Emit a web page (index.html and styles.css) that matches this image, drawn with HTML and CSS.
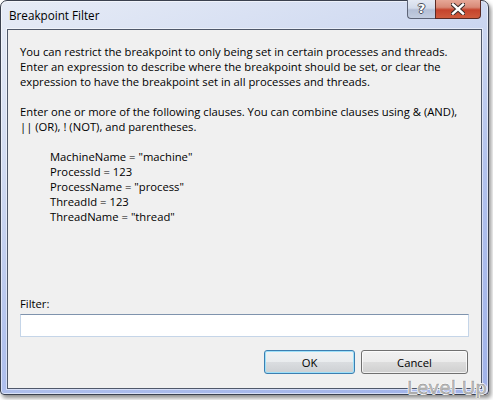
FILE: index.html
```html
<!DOCTYPE html>
<html>
<head>
<meta charset="utf-8">
<link rel="stylesheet" href="styles.css">
</head>
<body>
<div class="window">
  <div class="titlebar">
    <span class="title">Breakpoint Filter</span>
    <div class="caption">
      <div class="cap help"><span>?</span></div>
      <div class="cap close">
        <svg width="14" height="12" viewBox="0 0 14 12">
          <path d="M2 1.5 L12 10.5 M12 1.5 L2 10.5" stroke="#3a2a28" stroke-width="4.4" stroke-linecap="square" fill="none"/>
          <path d="M2 1.5 L12 10.5 M12 1.5 L2 10.5" stroke="#ffffff" stroke-width="2.4" stroke-linecap="square" fill="none"/>
        </svg>
      </div>
    </div>
  </div>
  <div class="client">
    <p class="para">You can restrict the breakpoint to only being set in certain processes and threads.<br>Enter an expression to describe where the breakpoint should be set, or clear the<br>expression to have the breakpoint set in all processes and threads.</p>
    <p class="para">Enter one or more of the following clauses. You can combine clauses using &amp; (AND),<br>|| (OR), ! (NOT), and parentheses.</p>
    <div class="clauses">
      <div>MachineName = "machine"</div>
      <div>ProcessId = 123</div>
      <div>ProcessName = "process"</div>
      <div>ThreadId = 123</div>
      <div>ThreadName = "thread"</div>
    </div>
    <div class="filter">
      <label class="label" for="f">Filter:</label>
      <input class="input" id="f" type="text">
    </div>
    <div class="buttons">
      <button class="btn default">OK</button>
      <button class="btn cancel">Cancel</button>
    </div>
  </div>
  <div class="watermark">Level Up</div>
</div>
</body>
</html>
```
FILE: styles.css
```css
html, body {
  margin: 0;
  padding: 0;
  background: #ffffff;
}
body {
  width: 493px;
  height: 400px;
  overflow: hidden;
  font-family: "Open Sans", "Noto Sans", sans-serif;
  font-size: 11.25px;
  color: #000;
}
.window {
  position: relative;
  width: 489px;
  height: 395px;
  box-sizing: border-box;
  border: 1px solid #3b414f;
  border-radius: 7px 7px 4px 4px;
  background: linear-gradient(160deg, #e7ecf6 0%, #d0daf1 30%, #b2c2ed 60%, #a0b2e9 100%);
  box-shadow: 2px 3px 4px rgba(0, 0, 0, 0.45), inset 0 0 0 1px rgba(255, 255, 255, 0.55);
  display: flex;
  flex-direction: column;
  padding: 0 6px 5px 6px;
}
.titlebar {
  height: 28px;
  display: flex;
  align-items: flex-start;
}
.title {
  margin-top: 6px;
  padding-left: 2px;
  font-size: 11.7px;
  line-height: 16px;
  color: #000;
}
.caption {
  margin-left: auto;
  margin-right: 1px;
  margin-top: -1px;
  display: flex;
}
.cap {
  height: 19px;
  box-sizing: border-box;
  display: flex;
  align-items: center;
  justify-content: center;
}
.help {
  width: 28px;
  border: 1px solid #5d6477;
  border-top: none;
  border-right: none;
  border-radius: 0 0 0 4px;
  background: linear-gradient(#e4e9f3 0%, #d3dbea 45%, #b4bfd6 55%, #c3cde0 100%);
}
.help span {
  font-family: "DejaVu Sans", sans-serif;
  font-weight: bold;
  font-size: 13px;
  line-height: 16px;
  color: #fff;
  text-shadow: -1px 0 #4a4e5a, 1px 0 #4a4e5a, 0 -1px #4a4e5a, 0 1px #4a4e5a;
}
.close {
  width: 46px;
  border: 1px solid #5a2a24;
  border-top: none;
  border-radius: 0 0 4px 0;
  background: linear-gradient(#e6a797 0%, #d88a77 40%, #c5432c 55%, #cf5b3d 100%);
}
.client {
  flex: 1;
  background: #f0f0f0;
  border: 1px solid #4f586a;
  box-shadow: 0 0 0 1px rgba(255, 255, 255, 0.5);
  padding: 14px 12px 14px 12px;
  display: flex;
  flex-direction: column;
  line-height: 15px;
}
.para {
  margin: 0 0 15px 0;
  white-space: nowrap;
}
.clauses {
  margin-left: 30px;
}
.filter {
  margin-top: auto;
  display: flex;
  flex-direction: column;
}
.label {
  line-height: 15px;
}
.input {
  margin: 3px 0 0 0;
  height: 23px;
  box-sizing: border-box;
  width: 100%;
  background: #fff;
  border: 1px solid #c5d5e8;
  border-top-color: #7f93ad;
  padding: 0;
  outline: none;
}
.buttons {
  margin-top: 13px;
  display: flex;
  justify-content: flex-end;
  gap: 6px;
  padding-right: 1px;
}
.btn {
  height: 24px;
  box-sizing: border-box;
  font-family: "Open Sans", "Noto Sans", sans-serif;
  font-size: 11.25px;
  color: #000;
  border: 1px solid #707070;
  border-radius: 3px;
  background: linear-gradient(#f2f2f2 0%, #ebebeb 50%, #dddddd 51%, #cfcfcf 100%);
  box-shadow: inset 0 0 0 1px rgba(255, 255, 255, 0.7);
  padding: 0;
}
.default {
  width: 91px;
  border-color: #3c7fb1;
  background: linear-gradient(#f0f2f3 0%, #e9ecee 50%, #dadde0 51%, #cdd0d3 100%);
  box-shadow: inset 0 0 0 1px #9ee0f9;
}
.cancel {
  width: 107px;
}
.watermark {
  position: absolute;
  right: 1px;
  bottom: -6px;
  font-family: "DejaVu Sans", sans-serif;
  font-size: 18.5px;
  line-height: 24px;
  color: #bdbdbd;
  text-shadow: -1px 0 #fff, 1px 0 #fff, 0 -1px #fff, 0 1px #fff;
  -webkit-text-stroke: 0.4px #8a8a8a;
}
```
